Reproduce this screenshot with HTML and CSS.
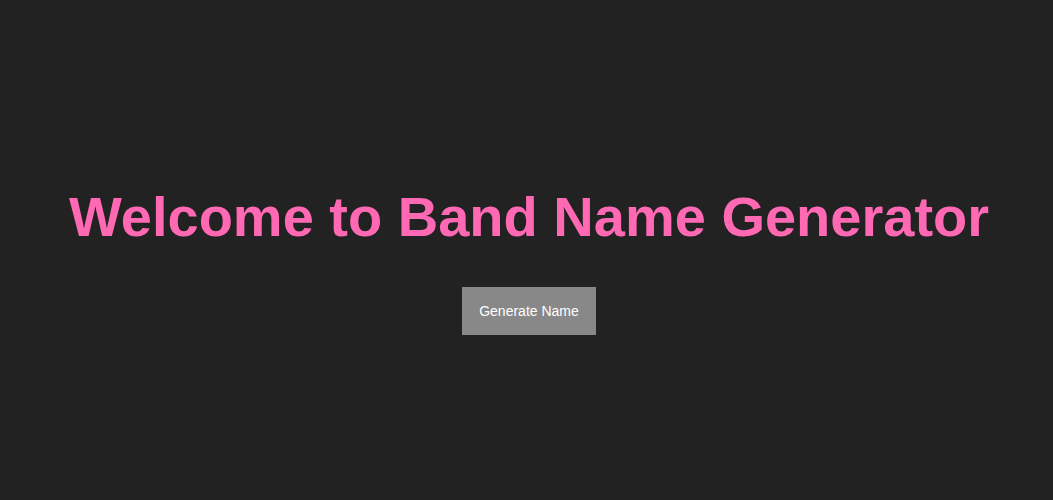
FILE: index.html
```html
<!DOCTYPE html>
<html lang="en">
<head>
<meta charset="utf-8">
<meta name="viewport" content="width=device-width, initial-scale=1">
<title>Band Name Generator</title>
<link rel="stylesheet" href="styles.css">
</head>
<body class="page">
<main class="hero">
<h1 class="title">Welcome to Band Name Generator</h1>
<button class="generate" type="button">Generate Name</button>
</main>
</body>
</html>
```

FILE: styles.css
```css
.page {
  margin: 0;
  background: #222;
  font-family: "Liberation Sans", Arial, sans-serif;
}

.hero {
  box-sizing: border-box;
  min-height: 100vh;
  padding: 20px 0 0 5px;
  display: flex;
  flex-direction: column;
  align-items: center;
  justify-content: center;
  gap: 38px;
  text-align: center;
}

.title {
  margin: 0;
  color: #ff69b4;
  font-size: 56px;
  line-height: 64px;
}

.generate {
  padding: 16px 17px;
  border: 0;
  background: #888;
  color: #fff;
  font-family: inherit;
  font-size: 14px;
  line-height: 16px;
  cursor: pointer;
}
```
